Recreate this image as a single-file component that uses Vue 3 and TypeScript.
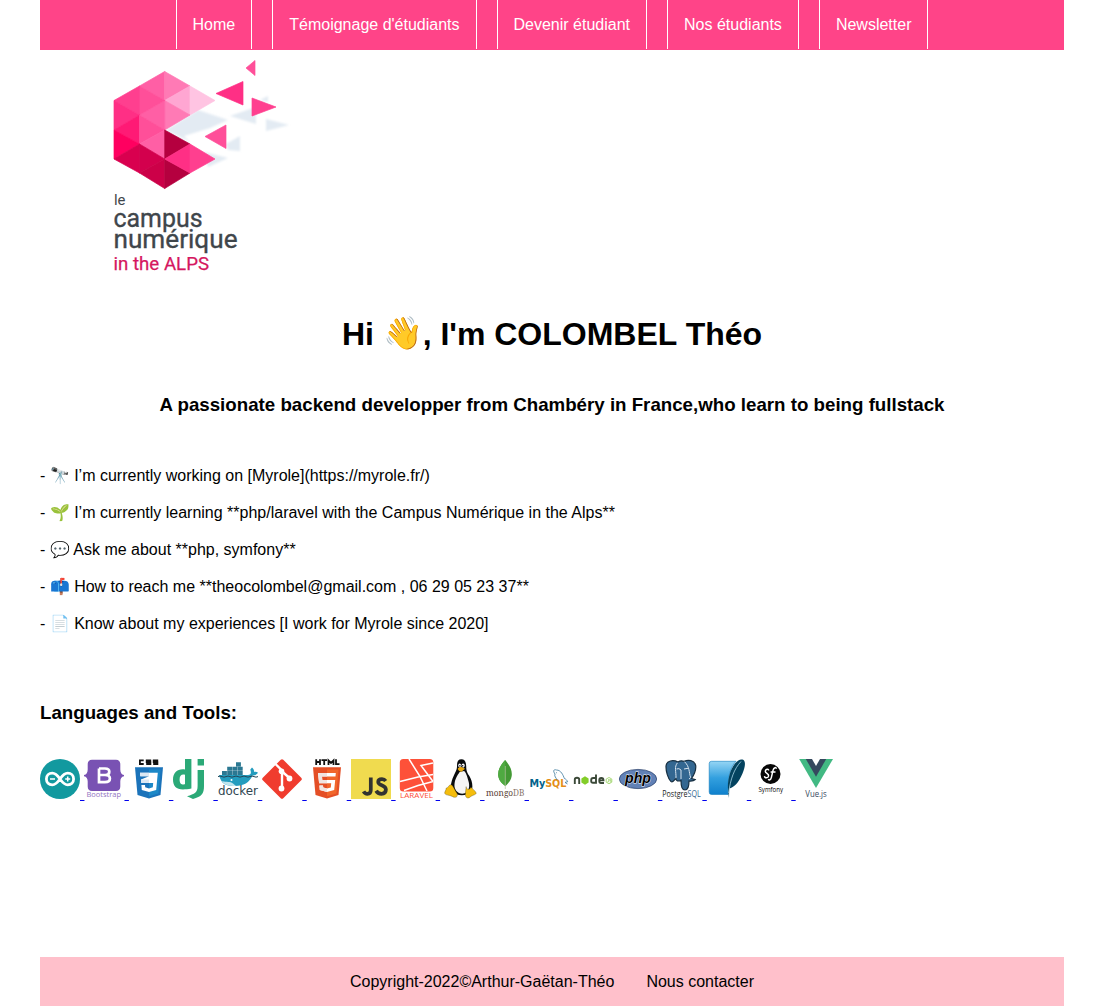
<script setup lang="ts">
interface Facet { points: string; fill: string }
interface Fact { icon: string; text: string }

const links: string[] = ['Home', "Témoignage d'étudiants", 'Devenir étudiant', 'Nos étudiants', 'Newsletter']

const facts: Fact[] = [
  { icon: '🔭', text: 'I’m currently working on [Myrole](https://myrole.fr/)' },
  { icon: '🌱', text: 'I’m currently learning **php/laravel with the Campus Numérique in the Alps**' },
  { icon: '💬', text: 'Ask me about **php, symfony**' },
  { icon: '📫', text: 'How to reach me **theocolombel@gmail.com , 06 29 05 23 37**' },
  { icon: '📄', text: 'Know about my experiences [I work for Myrole since 2020]' },
]

const facets: Facet[] = [
  { points: '64.7,21.5 64.7,50.5 39.5,36', fill: '#ff5fa5' },
  { points: '64.7,21.5 64.7,50.5 90,36', fill: '#ff7ab5' },
  { points: '64.7,50.5 90,36 90,65', fill: '#ffa6d2' },
  { points: '90,36 90,65 115,50.5', fill: '#ffc4e2' },
  { points: '64.7,50.5 90,65 64.7,80', fill: '#ff7ab5' },
  { points: '64.7,50.5 39.5,65 64.7,80', fill: '#ff5fa5' },
  { points: '39.5,36 39.5,65 64.7,50.5', fill: '#ff4f99' },
  { points: '39.5,36 39.5,65 14,50.5', fill: '#ff3f8f' },
  { points: '14,50.5 14,80 39.5,65', fill: '#ff2f85' },
  { points: '14,80 39.5,65 39.5,94', fill: '#ff1a75' },
  { points: '39.5,65 39.5,94 64.7,80', fill: '#ff4f99' },
  { points: '39.5,94 64.7,80 64.7,109', fill: '#ff5fa5' },
  { points: '14,80 14,109 39.5,94', fill: '#ff0060' },
  { points: '14,109 39.5,94 39.5,123', fill: '#d9004f' },
  { points: '39.5,94 39.5,123 64.7,109', fill: '#d3004d' },
  { points: '39.5,123 64.7,109 64.7,138.5', fill: '#cc0048' },
  { points: '64.7,109 64.7,138.5 90,123', fill: '#b5003f' },
  { points: '64.7,80 64.7,109 90,94', fill: '#b5003f' },
  { points: '64.7,109 90,94 90,123', fill: '#ff2f85' },
  { points: '90,94 90,123 115,109', fill: '#ff3f8f' },
  { points: '155,10.5 155,25.5 146,18', fill: '#ff4f99' },
  { points: '143,31.5 143,55 116,43.5', fill: '#ff2f85' },
  { points: '152,48 152,66 176,57', fill: '#ff3f8f' },
  { points: '126,75 126,98.5 105,86.5', fill: '#ff4f99' },
]
</script>

<template>
  <div class="page">
    <nav class="nav">
      <a v-for="link in links" :key="link" class="nav-link">{{ link }}</a>
    </nav>

    <svg class="logo" viewBox="0 0 200 230" width="200" height="230">
      <defs>
        <filter id="soft" x="-20%" y="-20%" width="140%" height="140%"><feGaussianBlur stdDeviation="1.3" /></filter>
      </defs>
      <g fill="#e3ebf3" filter="url(#soft)">
        <path d="M66 80L98 60L128 70L110 78L84 86L90 92Z" />
        <path d="M130 66L156 57V74Z" /><path d="M160 50L168 46V52Z" />
        <path d="M166 69L189 75L166 81Z" />
        <path d="M126 94L140 86V101L128 100Z" /><path d="M104 102L128 108L108 117Z" />
      </g>
      <polygon v-for="f in facets" :key="f.points" :points="f.points" :fill="f.fill" :stroke="f.fill" stroke-width=".7" stroke-linejoin="round" />
      <g class="logo-text" fill="#3f464b">
        <text x="14" y="155" font-size="15.5" textLength="11.5" lengthAdjust="spacingAndGlyphs">le</text>
        <text x="13.5" y="176.6" font-size="26" stroke="#3f464b" stroke-width=".35" textLength="89" lengthAdjust="spacingAndGlyphs">campus</text>
        <text x="13.5" y="197.6" font-size="26" stroke="#3f464b" stroke-width=".35" textLength="124" lengthAdjust="spacingAndGlyphs">numérique</text>
        <text x="13.5" y="219.5" font-size="18" fill="#d5175f" stroke="#d5175f" stroke-width=".25" textLength="95.5" lengthAdjust="spacingAndGlyphs">in the ALPS</text>
      </g>
    </svg>

    <h1>Hi <span class="emoji">👋</span>, I'm COLOMBEL Théo</h1>
    <h3 class="tagline">A passionate backend developper from Chambéry in France,who learn to being fullstack</h3>

    <div class="facts">
      <p v-for="fact in facts" :key="fact.text">- <span class="emoji">{{ fact.icon }}</span> {{ fact.text }}</p>
    </div>

    <h3 class="tools-title">Languages and Tools:</h3>
    <p class="tools">
      <!-- Arduino -->
      <a href="#"><svg viewBox="0 0 40 40">
        <circle cx="20" cy="20" r="20" fill="#12999f" />
        <path d="M20 20C17 15.8 15 14.2 12.3 14.2C8.8 14.2 6.4 16.7 6.4 20S8.8 25.8 12.3 25.8C15 25.8 17 24.2 20 20S25 14.2 27.7 14.2C31.2 14.2 33.6 16.7 33.6 20S31.2 25.8 27.7 25.8C25 25.8 23 24.2 20 20Z" fill="none" stroke="#fff" stroke-width="2.8" />
        <path d="M10 20H15M25.2 20H30.2M27.7 17.5V22.5" stroke="#fff" stroke-width="1.5" />
      </svg>{{ ' ' }}</a>
      <!-- Bootstrap -->
      <a href="#"><svg viewBox="0 0 40 40">
        <path d="M8 .7H32C35 .7 36.3 2.6 36.3 5.4V10.5C36.3 13.5 37.5 15.6 40 16V17.3C37.5 17.7 36.3 19.8 36.3 22.5V27.5C36.3 30.4 34.8 32 32 32H8C5.2 32 3.7 30.4 3.7 27.5V22.5C3.7 19.8 2.5 17.7 0 17.3V16C2.5 15.6 3.7 13.5 3.7 10.5V5.4C3.7 2.6 5 .7 8 .7Z" fill="#7952b3" />
        <path d="M15 9.5H21C24 9.5 25.3 10.6 25.3 12.7S24 16 21.3 16H15M21 16C24.3 16 25.9 17.4 25.9 19.6S24.3 23.2 21 23.2H15V9.5" fill="none" stroke="#fff" stroke-width="2.7" />
        <text x="2.5" y="38" class="label-medium" font-size="7.7" fill="#9274c2" textLength="34.5" lengthAdjust="spacingAndGlyphs">Bootstrap</text>
      </svg>{{ ' ' }}</a>
      <!-- CSS3 -->
      <a href="#"><svg viewBox="0 0 40 40">
        <path d="M12 1.3H8.2V5H12M19.5 1.3H15V3.1H18.7V5H14.5M26.5 1.3H22V3.1H25.7V5H21.5" transform="translate(2.7)" fill="none" stroke="#111" stroke-width="1.8" />
        <path d="M6 8.3H34L31.5 36L20 39.5L8.5 36Z" fill="#1b73ba" /><path d="M20 10.5H31.6L29.4 34.5L20 37.2Z" fill="#1c88c7" />
        <path d="M11 13.7H28.8L27.2 31L20 33L12.8 31L12.4 26H16L16.2 28.3L20 29.4L23.8 28.3L24.2 24H12.3L12 20.5L20 17.2H11.3Z" fill="#fff" />
        <path d="M12 20.5H20V24H12.3ZM11 13.7H20V17.2H11.3Z" fill="#dce8f3" />
      </svg>{{ ' ' }}</a>
      <!-- Django -->
      <a href="#"><svg viewBox="0 0 40 40">
        <path d="M12 0H18.4V29.6C15 30.2 12.7 30.5 10 30.5C3.2 30.5 0 27.2 0 20.6C0 14.2 3.9 10.3 9.7 10.3C10.6 10.3 11.2 10.3 12 10.6ZM12 15.8C8.7 14.8 6.6 16.6 6.6 20.4C6.6 24.8 8.6 25.8 12 25.3ZM24.6 11H31V27C31 35 28.5 37.6 20 40L14 37.3C21.7 34.8 24.6 33.5 24.6 27ZM24.6 0H31V6.5H24.6Z" fill="#2ba977" fill-rule="evenodd" />
      </svg>{{ ' ' }}</a>
      <!-- Docker -->
      <a href="#"><svg viewBox="0 0 40 40">
        <path d="M1 16H30C33 16 33.5 14.4 32.3 10.5L34 8.5C36 10 36.3 12 36 13C38 12.5 39 13 40 13.8C38.6 16 36.4 16.7 34.5 16.5C31.5 23.5 25.5 27 17 27C8 27 3.5 25.5 1 16Z" fill="#239cbe" />
        <path d="M4 12H8.9V16H4ZM9.2 12H14.2V16H9.2ZM14.5 12H19.5V16H14.5ZM19.8 12H24.7V16H19.8ZM9.2 7.8H14.2V11.7H9.2ZM14.5 7.8H19.5V11.7H14.5ZM19.8 7.8H24.7V11.7H19.8ZM18 3.2H22.9V7.5H18Z" fill="#2b7892" />
        <path d="M0 17.6Q2 16.5 4 17.6T8 17.6T12 17.6T16 17.6T20 17.6T24 17.6T28 17.6T32 17.6T36 17.6T40 17.6" fill="none" stroke="#254657" stroke-width="1" />
        <path d="M4 22C9 23.5 12 22 15 24.5L18 27C9 27 5.5 25.5 4 22Z" fill="#c0e5ed" /><circle cx="13.5" cy="21" r="1" fill="#fff" />
        <text x="0" y="36.4" class="label-wide" font-size="12.5" fill="#304650" textLength="40" lengthAdjust="spacingAndGlyphs">docker</text>
      </svg>{{ ' ' }}</a>
      <!-- Git -->
      <a href="#"><svg viewBox="0 0 40 40">
        <rect x="5.5" y="5.5" width="29" height="29" rx="1.8" transform="rotate(45 20 20)" fill="#f03c2e" />
        <path d="M13.5 5L20 11.5V29.5M20 12.5L27.5 19" fill="none" stroke="#fff" stroke-width="2.4" />
        <g fill="#fff"><circle cx="19.5" cy="12.3" r="2.8" /><circle cx="19.5" cy="29.5" r="2.9" /><circle cx="27.5" cy="19.5" r="2.9" /></g>
      </svg>{{ ' ' }}</a>
      <!-- HTML5 -->
      <a href="#"><svg viewBox="0 0 40 40">
        <path d="M9.2 .2V6M13 .2V6M9.2 3H13M14.5 1.2H20M17.2 1V6M21.5 6V1.5L24 4L26.5 1.5V6M29 .2V5.2H32.5" fill="none" stroke="#111" stroke-width="1.8" />
        <path d="M6 8.3H34L31.5 36L20 39.5L8.5 36Z" fill="#e44f26" /><path d="M20 10.5H31.6L29.4 34.5L20 37.2Z" fill="#f1662a" />
        <path d="M11 14H28.8L28.5 17.5H15L15.3 21H28.2L27.2 31L20 33L12.8 31L12.4 26.5H16L16.2 28.4L20 29.4L23.8 28.4L24.2 24.3H12.1Z" fill="#fff" />
        <path d="M11 14H20V17.5H15L15.3 21H20V24.3H12.1ZM12.4 26.5H16L16.2 28.4L20 29.4V33L12.8 31Z" fill="#f0e5e1" />
      </svg>{{ ' ' }}</a>
      <!-- JavaScript -->
      <a href="#"><svg viewBox="0 0 40 40">
        <path d="M0 0H40V40H0Z" fill="#f0db4f" />
        <path d="M19.8 18.5V31C19.8 34 18.5 34.8 16.4 34.8C14.4 34.8 13.4 33.8 12.6 32.3M34.7 22C33.8 20.7 32.6 20.1 31 20.1C28.8 20.1 27.2 21 27.2 22.9C27.2 27 34.9 25.5 34.9 30.6C34.9 33.4 33 34.8 30.5 34.8C27.8 34.8 26.2 33.7 25.1 31.8" fill="none" stroke="#323330" stroke-width="3.7" />
      </svg>{{ ' ' }}</a>
      <!-- Laravel -->
      <a href="#"><svg viewBox="0 0 40 40">
        <rect x="3.8" y="0" width="33.5" height="32.5" rx="3.5" fill="#fd5139" />
        <path d="M4 22.5L24 17.5L13 0M24 17.5L31 32M22 18L37 15.5M37 4L25 6.5L37 22.5M8 31.5L22 26.5L37 22.5" fill="none" stroke="#fff" stroke-width="1.5" />
        <text x="4" y="39.4" class="label-medium" font-size="8" fill="#fd5139" textLength="33" lengthAdjust="spacingAndGlyphs">LARAVEL</text>
      </svg>{{ ' ' }}</a>
      <!-- Linux -->
      <a href="#"><svg viewBox="0 0 40 40"><g transform="translate(4 .2) scale(.87 .98)">
        <path d="M20 0C16 0 14.8 3 15 7C15 12 11.5 15 9 22C7.5 27 7 30 10 33C14 38 27 38 31 33C34 29 32.5 22 29 17C26 13 25.7 11 25.5 7C25.3 3 24 0 20 0Z" fill="#090b0d" />
        <path d="M18 13C15 17 12.5 20 12 26C11.6 31 16 36 23 35C29 34 30 27 28 22C26.5 17 25 13 23 12Z" fill="#f5f5f5" />
        <path d="M8 26C10 26 12 31 15 35C16.5 38.5 13 40 9.5 38C6 36.2 2 37.2 1 35C.2 33.2 2.5 32.3 2.5 29.5C4.8 29.5 5.5 26 8 26ZM25.5 28C25.5 31 29 32 31 28.5C33 31 36 32 37 34.5C37 36.4 32 36.7 29.5 39C26.5 40.5 24 39 24.7 34Z" fill="#f5bd0c" stroke="#55460e" stroke-width=".4" />
        <ellipse cx="18" cy="6.5" rx="1.6" ry="2.1" fill="#fff" /><ellipse cx="22" cy="6.5" rx="1.8" ry="2.2" fill="#fff" /><circle cx="18.3" cy="6.8" r=".8" /><circle cx="21.5" cy="6.8" r=".8" />
        <path d="M15.8 9.5C17.5 8.5 18.3 8 20 8L24.2 9.8L20 12.8C18 12.8 16 11 15.8 9.5Z" fill="#e9a90c" />
      </g></svg>{{ ' ' }}</a>
      <!-- MongoDB -->
      <a href="#"><svg viewBox="0 0 40 40">
        <path d="M20.2 1C25 7 27.4 11 26.7 17C26 22 22.5 25 20.6 27C17 24.5 13.8 21.5 13.3 17C12.6 11 15.5 6 20.2 1Z" fill="#439934" /><path d="M20.2 1C15.5 6 12.6 11 13.3 17C13.8 21.5 17 24.5 20.2 27Z" fill="#4faa41" /><path d="M20.3 7V30" stroke="#b6c1a0" stroke-width=".7" />
        <text x="1" y="37" class="label-serif" font-size="9.2" textLength="38.5" lengthAdjust="spacingAndGlyphs"><tspan fill="#583c32">mongo</tspan><tspan fill="#8b776f">DB</tspan></text>
      </svg>{{ ' ' }}</a>
      <!-- MySQL -->
      <a href="#"><svg viewBox="0 0 40 40">
        <text x=".4" y="28.3" class="label-mysql" font-size="9.6" textLength="37" lengthAdjust="spacingAndGlyphs"><tspan fill="#00618a">My</tspan><tspan fill="#e48e18">SQL</tspan></text>
        <path d="M28 21C27.2 18.5 25 17.5 26 15C23.8 12 24.5 10 27.5 11C32 11 34 16 35.4 19.5C37 20 38 21.4 38.7 22.7L36 23.4L38.5 25M27.2 13.5L28 14" fill="none" stroke="#38779a" stroke-width=".8" />
      </svg>{{ ' ' }}</a>
      <!-- Node.js -->
      <a href="#"><svg viewBox="0 0 40 40">
        <path d="M1.8 25V20.5Q1.8 18.8 4 18.8T6.2 20.5V25M23 15.5V23.8H20Q18.2 23.8 18.2 22V21Q18.2 19 20.2 19H23M31 24H28Q26.3 24 26.3 22V21Q26.3 19 28.3 19Q30.5 19 30.5 21.4H27" fill="none" stroke="#3b4938" stroke-width="1.9" />
        <path d="M12 17.3L15.6 19.4V23.6L12 25.7L8.4 23.6V19.4Z" fill="#83cd29" />
        <path d="M36 18.5L38.8 20V23.2L36 24.8L33.2 23.2V20Z" fill="none" stroke="#a2d76d" stroke-width=".9" /><path d="M35.5 20V23H34M38 20.5H36.5V21.5H38V23H36.5" fill="none" stroke="#91cf54" stroke-width=".6" />
      </svg>{{ ' ' }}</a>
      <!-- PHP -->
      <a href="#"><svg viewBox="0 0 40 40">
        <ellipse cx="20" cy="20" rx="18.7" ry="9.6" fill="#6181b6" stroke="#243b66" stroke-width=".7" />
        <text x="7" y="24" class="label-php" font-size="15.5" textLength="26" lengthAdjust="spacingAndGlyphs">php</text>
      </svg>{{ ' ' }}</a>
      <!-- PostgreSQL -->
      <a href="#"><svg viewBox="0 0 40 40">
        <path d="M16 3C11 .5 4.5 1.6 4 7C3.8 12 6 20 9 22.5C11 24 12 21 14 19.5C14 22 16 22.5 19 21.5C19 27 19.5 31 23 31C26.5 31 27 27 27 22C30 22.3 32 21.8 33.2 20.5L29.5 19.5C32.5 15 34.2 10.5 33.7 6.5C32.5 1 26 .5 22 2.4C20 1.4 18 1.6 16 3Z" fill="#336791" stroke="#172f41" stroke-width="1.2" />
        <path d="M15.5 3.8C12 8 14.2 12 14 19.2M22.5 2.7C28 8 26.7 13 28.7 18.8M14.5 10Q17 8.8 19 11V20M22 10L26 9.3M27 20L28.5 18.8" fill="none" stroke="#d8e5f0" stroke-width="1" />
        <text x=".2" y="37.6" class="label-medium" font-size="8.3" textLength="38.5" lengthAdjust="spacingAndGlyphs"><tspan fill="#222">Postgre</tspan><tspan fill="#336791">SQL</tspan></text>
      </svg>{{ ' ' }}</a>
      <!-- SQLite -->
      <a href="#"><svg viewBox="0 0 40 40">
        <defs><linearGradient id="sqlite" x2="0" y2="1"><stop stop-color="#95d5f4" /><stop offset=".5" stop-color="#33a0df" /><stop offset="1" stop-color="#0f80cc" /></linearGradient></defs>
        <path d="M4.5 2.3H29C22.5 9 20.5 20 21 35.5H4.5Q2.2 35.5 2.2 33V4.6Q2.2 2.3 4.5 2.3Z" fill="url(#sqlite)" stroke="#127cbe" stroke-width=".6" />
        <path d="M35.5 .5C39 1.5 38.5 7.5 35.5 14.5C31.5 24 27 28.5 22.2 29.5L22 39C19.2 25 22 12 28 4.5C31 1 33 0 35.5 .5Z" fill="#04435f" /><path d="M34 2.5C27 10 23.5 20 21.7 34" fill="none" stroke="#a9d6e8" stroke-width=".8" />
      </svg>{{ ' ' }}</a>
      <!-- Symfony -->
      <a href="#"><svg viewBox="0 0 40 40">
        <circle cx="19.5" cy="15" r="10" fill="#060606" />
        <path d="M17.6 11.5C17.6 9.5 14.3 10 14.3 12.3C14.3 14.6 18 14.4 17.6 17C17.2 19.6 13.2 19.3 13.6 17.1M25.4 9.8C25.3 7.8 22.8 8.3 22 11.4L20.4 18.4C19.7 21.3 18 21.6 17.4 20.1M19.6 13H24.5" fill="none" stroke="#fff" stroke-width="1.5" />
        <text x="7.5" y="32.6" class="label-medium" font-size="6.8" textLength="24.5" lengthAdjust="spacingAndGlyphs">Symfony</text>
      </svg>{{ ' ' }}</a>
      <!-- Vue.js -->
      <a href="#"><svg viewBox="0 0 40 40">
        <path d="M3.2 0H37L20 29Z" fill="#42b983" /><path d="M9.8 0H30.2L20 17.8Z" fill="#35495e" /><path d="M16 0H24L20 7Z" fill="#fff" />
        <text x="9.3" y="37.6" class="label-medium" font-size="9.2" fill="#35495e" textLength="21.5" lengthAdjust="spacingAndGlyphs">Vue.js</text>
      </svg></a>
    </p>

    <footer class="footer">
      <span>Copyright-2022©Arthur-Gaëtan-Théo</span>
      <span>Nous contacter</span>
    </footer>
  </div>
</template>

<style>
body { background: #fff; }
</style>

<style scoped>
.page {
  box-sizing: border-box;
  display: flex;
  flex-direction: column;
  width: 1024px;
  height: 1006px;
  margin-left: 40px;
  font-family: "Liberation Sans", Arial, "Noto Color Emoji", sans-serif;
  font-size: 16px;
  color: #000;
}
.nav { display: flex; flex: none; justify-content: center; align-items: flex-start; gap: 20px; height: 50px; background: #ff4488; }
.nav-link { box-sizing: border-box; height: 49px; padding: 0 16px; border: solid #fff; border-width: 0 1px; line-height: 49px; color: #fff; }
.logo { display: block; flex: none; margin-left: 60px; }
.logo-text { font-family: Roboto, sans-serif; }
h1, h3, p { flex: none; margin: 0; }
h1 { margin-top: 36px; font-size: 32px; line-height: 36px; text-align: center; }
h1 .emoji { display: inline-block; transform: translate(1px, -1px); }
h3 { font-size: 18.72px; line-height: 22px; }
.tagline { margin-top: 42px; text-align: center; }
.facts { flex: none; margin-top: 41px; }
.facts p { height: 37px; line-height: 37px; }
.facts .emoji { display: inline-block; transform: translateX(1px); }
.tools-title { margin-top: 60px; }
.tools { height: 46px; margin-top: 35px; white-space: nowrap; }
.tools a { color: #0000ee; text-decoration: underline; }
.tools svg { width: 40px; height: 40px; overflow: visible; vertical-align: baseline; font-family: "Open Sans", sans-serif; }
.tools .label-medium { font-weight: 500; }
.tools .label-wide { font-family: "DejaVu Sans", sans-serif; }
.tools .label-serif { font-family: "Noto Serif", "Liberation Serif", serif; }
.tools .label-mysql { font-family: "DejaVu Sans", sans-serif; font-weight: bold; }
.tools .label-php { font-family: "Liberation Sans", sans-serif; font-style: italic; font-weight: bold; fill: #000; stroke: #fff; stroke-width: .9px; paint-order: stroke; }
.footer { display: flex; flex: none; justify-content: center; align-items: center; gap: 32px; height: 49px; margin-top: auto; background: #ffc0cb; }
</style>
